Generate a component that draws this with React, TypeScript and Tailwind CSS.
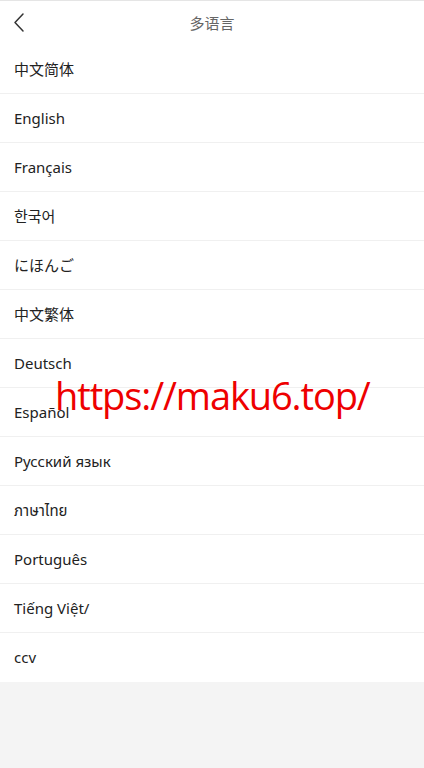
import React from "react";

const langs = [
  "中文简体",
  "English",
  "Français",
  "한국어",
  "にほんご",
  "中文繁体",
  "Deutsch",
  "Español",
  "Русский язык",
  "ภาษาไทย",
  "Português",
  "Tiếng Việt/",
  "ccv",
];

export default function App() {
  return (
    <div
      className="relative min-h-[768px] bg-[#f4f4f4]"
      style={{ fontFamily: '"Noto Sans", "Noto Sans CJK SC", "Noto Sans Thai", sans-serif' }}
    >
      <div className="h-[45px] bg-white border-t border-[#e5e5e5] flex items-center relative">
        <div className="absolute left-[12px] top-[11px]">
          <svg width="14" height="22" viewBox="0 0 14 22" fill="none">
            <path d="M11 2 L3 10.5 L11 19" stroke="#333" strokeWidth="1.5" strokeLinecap="round" strokeLinejoin="round" />
          </svg>
        </div>
        <div className="flex-1 text-center text-[15px] text-[#666]">多语言</div>
      </div>
      <div className="bg-white">
        {langs.map((l, i) => (
          <div
            key={i}
            className={`h-[49px] flex items-center px-[14px] text-[15px] text-[#222] ${i < langs.length - 1 ? "border-b border-[#f0f0f0]" : ""}`}
          >
            {l}
          </div>
        ))}
      </div>
      <div
        className="absolute left-[55px] top-[370px] text-[38px] leading-[50px] tracking-[-1.1px] text-[#ee0000] pointer-events-none"
        style={{ fontFamily: '"Open Sans", sans-serif' }}
      >
        https://maku6.top/
      </div>
    </div>
  );
}
